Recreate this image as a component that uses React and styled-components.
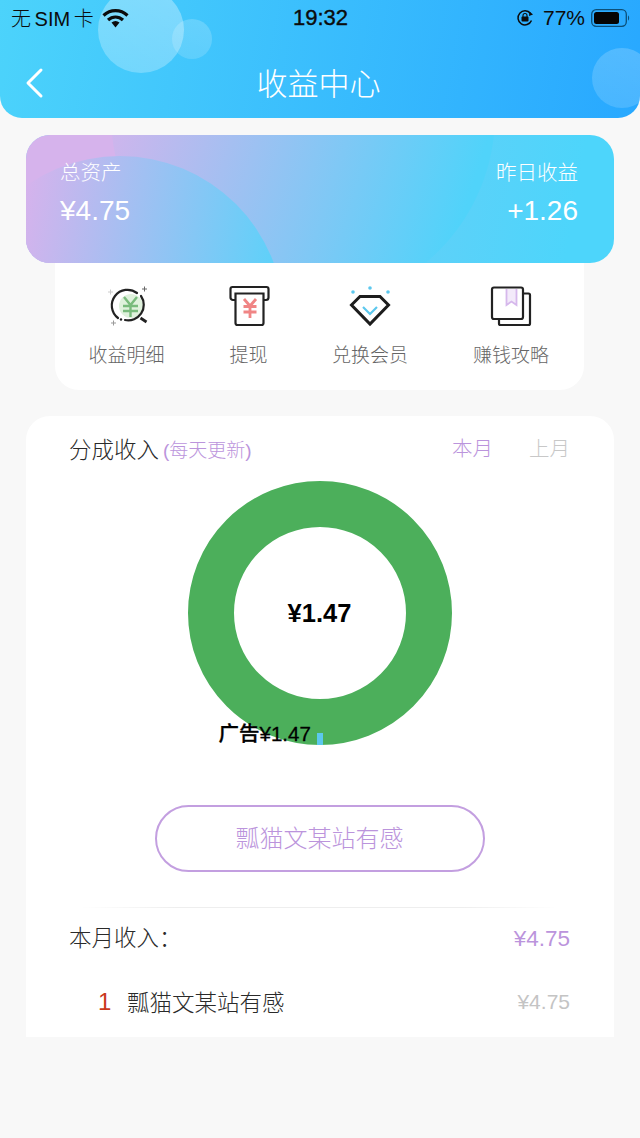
import React from 'react';
import styled, { createGlobalStyle } from 'styled-components';

const GlobalStyle = createGlobalStyle`
  html, body {
    margin: 0;
    padding: 0;
    background: #f8f8f8;
    font-family: "Liberation Sans", "Noto Sans CJK SC", sans-serif;
    font-weight: 300;
  }
  * { box-sizing: border-box; }
`;

const Page = styled.div`
  width: 640px;
  height: 1138px;
  overflow: hidden;
  background: #f8f8f8;
`;

const Header = styled.header`
  position: relative;
  height: 118px;
  overflow: hidden;
  border-radius: 0 0 22px 22px;
  background: linear-gradient(100deg, #4cd3fb 0%, #28a8ff 100%);
`;

const Bubble = styled.div`
  position: absolute;
  left: ${p => p.$x - p.$r}px;
  top: ${p => p.$y - p.$r}px;
  width: ${p => p.$r * 2}px;
  height: ${p => p.$r * 2}px;
  border-radius: 50%;
  background: linear-gradient(200deg, rgba(255, 255, 255, ${p => p.$alpha}) 0%, rgba(255, 255, 255, ${p => p.$alpha * 0.7}) 100%);
`;

const StatusBar = styled.div`
  position: relative;
  display: grid;
  grid-template-columns: 1fr auto 1fr;
  align-items: center;
  height: 35px;
  padding: 0 10px 0 11px;
  color: #0c0c0c;
  font-size: 20px;
`;

const StatusSide = styled.div`
  display: flex;
  align-items: center;
  gap: ${p => p.$gap || 8}px;
  justify-content: ${p => (p.$right ? 'flex-end' : 'flex-start')};
`;

const Carrier = styled.span`
  word-spacing: -2px;
`;

const Percent = styled.span`
  margin-left: 3px;
  font-size: 21px;
`;

const Clock = styled.div`
  font-size: 22px;
  font-weight: 400;
  -webkit-text-stroke: 0.4px #0c0c0c;
`;

const NavBar = styled.div`
  position: relative;
  display: flex;
  align-items: center;
  justify-content: center;
  height: 80px;
`;

const BackButton = styled.button`
  position: absolute;
  left: 24px;
  top: 32px;
  width: 22px;
  height: 32px;
  padding: 0;
  border: 0;
  background: none;
`;

const Title = styled.h1`
  margin: 0;
  padding: 20px 3px 0 0;
  color: #fff;
  font-size: 31px;
  font-weight: 300;
  line-height: 40px;
`;

const Content = styled.main`
  padding: 17px 26px 0;
`;

const AssetCard = styled.section`
  position: relative;
  display: flex;
  justify-content: space-between;
  height: 128px;
  padding: 24px 36px 0 34px;
  overflow: hidden;
  border-radius: 24px;
  color: #fff;
  background: linear-gradient(100deg, #8fc4f1 0%, #4dd5fb 92%);
`;

const SideFill = styled.div`
  position: absolute;
  inset: 0 auto 0 0;
  width: 130px;
  background: #d6b3ec;
`;

const BigArc = styled.div`
  position: absolute;
  left: 85px;
  top: -212px;
  width: 384px;
  height: 384px;
  border-radius: 50%;
  background: linear-gradient(108deg, #d4b4ec 10%, #50d3fa 88%);
`;

const FrontArc = styled.div`
  position: absolute;
  left: -70px;
  top: 21px;
  width: 328px;
  height: 328px;
  border-radius: 50%;
  background: linear-gradient(100deg, #d8b2ec 18%, #4dd5fb 97%);
`;

const AssetColumn = styled.div`
  position: relative;
  text-align: ${p => (p.$right ? 'right' : 'left')};
`;

const AssetLabel = styled.div`
  font-size: 20.5px;
  line-height: 28px;
`;

const AssetValue = styled.div`
  margin-top: 8px;
  font-size: 28px;
  line-height: 32px;
`;

const Menu = styled.nav`
  display: grid;
  grid-template-columns: 143px 101px 142px 140px;
  height: 127px;
  margin: 0 30px 0 29px;
  padding-top: 21px;
  border-radius: 0 0 24px 24px;
  background: #fff;
`;

const MenuItem = styled.a`
  display: flex;
  flex-direction: column;
  align-items: center;
  color: #666;
  font-size: 19px;
  line-height: 26px;
`;

const MenuIcon = styled.svg`
  width: 48px;
  height: 48px;
  margin-bottom: 11px;
`;

const ChartCard = styled.section`
  position: relative;
  height: 621px;
  margin-top: 26px;
  padding: 0 44px 0 43px;
  border-radius: 24px 24px 0 0;
  background: #fff;
`;

const ChartHeader = styled.div`
  display: flex;
  align-items: center;
  height: 65px;
`;

const ChartTitle = styled.span`
  padding-bottom: 2px;
  color: #2a2a2a;
  font-size: 22.5px;
`;

const ChartHint = styled.span`
  margin-left: 4px;
  color: #bb94dc;
  font-size: 19px;
`;

const Tabs = styled.div`
  display: flex;
  gap: 36px;
  margin-left: auto;
  padding-bottom: 3px;
`;

const Tab = styled.span`
  color: ${p => (p.$active ? '#bb94dc' : '#c8c8c8')};
  font-size: 20.5px;
`;

const Donut = styled.div`
  position: relative;
  width: 264px;
  height: 264px;
  margin: 0 auto;
`;

const DonutTotal = styled.div`
  position: absolute;
  inset: 0;
  display: flex;
  align-items: center;
  justify-content: center;
  color: #000;
  font-size: 25.5px;
  font-weight: 700;
`;

const DonutLabel = styled.div`
  position: absolute;
  left: 31px;
  top: 240px;
  color: #000;
  font-size: 20.5px;
  font-weight: 500;
  -webkit-text-stroke: 0.3px #000;
  line-height: 26px;
  white-space: nowrap;
`;

const DonutTick = styled.div`
  position: absolute;
  left: 129px;
  top: 252px;
  width: 6px;
  height: 12px;
  background: #5cc8ee;
`;

const SourceButton = styled.button`
  display: block;
  width: 330px;
  height: 67px;
  margin: 60px auto 0;
  padding: 0 0 5px;
  border: 2px solid #c39fe0;
  border-radius: 34px;
  background: #fff;
  color: #bb94dc;
  font-family: inherit;
  font-weight: 300;
  font-size: 24px;
`;

const Divider = styled.div`
  height: 1px;
  margin: 35px 12px 0;
  background: linear-gradient(90deg, #fff, #eeeeee 20%, #eeeeee 80%, #fff);
`;

const SummaryRow = styled.div`
  display: flex;
  align-items: center;
  justify-content: space-between;
  height: 60px;
`;

const SummaryLabel = styled.span`
  padding-bottom: 4px;
  color: #2a2a2a;
  font-size: 22.5px;
`;

const SummaryValue = styled.span`
  padding-top: 2px;
  color: #bb94dc;
  font-size: 22.5px;
`;

const IncomeRow = styled.div`
  display: flex;
  align-items: center;
  height: 68px;
  padding-left: 29px;
`;

const Rank = styled.span`
  width: 29px;
  color: #c9391c;
  font-size: 24px;
`;

const IncomeName = styled.span`
  padding-bottom: 2px;
  color: #2a2a2a;
  font-size: 22.5px;
`;

const IncomeValue = styled.span`
  margin-left: auto;
  color: #c4c4c4;
  font-size: 21px;
`;

const WifiIcon = () => (
  <svg width="27" height="20" viewBox="0 0 27 20">
    <path d="M1.500 7.500C8.500 1 18.500 1 25.500 7.500" fill="none" stroke="#0c0c0c" strokeWidth="3.200" />
    <path d="M6 12c4.500-4 10.500-4 15 0" fill="none" stroke="#0c0c0c" strokeWidth="3.200" />
    <path d="M9.500 14.500c2.500-2 5.500-2 8 0L13.500 19.500z" fill="#0c0c0c" />
  </svg>
);

const LockIcon = () => (
  <svg width="18" height="20" viewBox="0 0 18 20">
    <path d="M15.500 12.500A7 7 0 1 1 14.500 5.500" fill="none" stroke="#0c0c0c" strokeWidth="1.500" />
    <path d="M13.500 3.500l3.500 3-4 1.500z" fill="#0c0c0c" />
    <rect x="5.500" y="8.500" width="7" height="5" rx="1" fill="#0c0c0c" />
    <path d="M7 9V7.500a2 2 0 0 1 4 0V9" fill="none" stroke="#0c0c0c" strokeWidth="1.100" />
  </svg>
);

const BatteryIcon = () => (
  <svg width="39" height="20" viewBox="0 0 39 20">
    <rect x="0.700" y="1.700" width="34.600" height="16.600" rx="4.500" fill="none" stroke="#0c4f78" strokeWidth="1.300" />
    <rect x="3" y="4" width="25" height="12" rx="2.500" fill="#050505" />
    <path d="M37 7.500c1.500.5 1.500 4.500 0 5z" fill="#0c4f78" />
  </svg>
);

const DetailIcon = () => (
  <MenuIcon viewBox="0 0 48 48">
    <circle cx="28" cy="22" r="12" fill="#dff1dc" />
    <path d="M37.500 34l6 4" fill="none" stroke="#222" strokeWidth="2.800" />
    <path d="M15 34a15.500 15.500 0 0 1 19-25M38 12a15.500 15.500 0 0 1-16 24" fill="none" stroke="#222" strokeWidth="2.200" strokeLinecap="round" />
    <circle cx="18" cy="35.500" r="1.200" fill="#222" />
    <path d="M21 13l6.500 8 6.500-8M20 22h15M20 27h15M27.500 21v12" fill="none" stroke="#79bb7c" strokeWidth="2.400" />
    <path d="M41.500 2.500v5M39 5h5" stroke="#666" strokeWidth="1" />
    <path d="M7.500 5.500v5M5 8h5" stroke="#ccc" strokeWidth="1" />
    <path d="M10.500 36.500v5M8 39h5" stroke="#999" strokeWidth="1" />
  </MenuIcon>
);

const WithdrawIcon = () => (
  <MenuIcon viewBox="0 0 48 48">
    <path d="M10 16H8a2.500 2.500 0 0 1-2.500-2.500V5a2 2 0 0 1 2-2h34a2 2 0 0 1 2 2v8.500A2.500 2.500 0 0 1 41 16h-2" fill="none" stroke="#222" strokeWidth="2.200" />
    <path d="M10.500 9.500h28V39a2 2 0 0 1-2 2h-24a2 2 0 0 1-2-2z" fill="#fff" stroke="#222" strokeWidth="2.200" />
    <path d="M19 15l6 7 6-7M18.500 22.500h13M18.500 28h13M25 22v12" fill="none" stroke="#f08585" strokeWidth="2.800" />
  </MenuIcon>
);

const DiamondIcon = () => (
  <MenuIcon viewBox="0 0 48 48">
    <circle cx="7" cy="8" r="1.800" fill="#5cc8ee" />
    <circle cx="24" cy="4" r="1.800" fill="#5cc8ee" />
    <circle cx="42" cy="8" r="1.800" fill="#5cc8ee" />
    <path d="M14 12.500h20l8.500 8.500L24 40 5.500 21z" fill="none" stroke="#1d1d1d" strokeWidth="3" />
    <path d="M17 23l7 7 7-7" fill="none" stroke="#5cc8ee" strokeWidth="2.200" />
  </MenuIcon>
);

const GuideIcon = () => (
  <MenuIcon viewBox="0 0 48 48">
    <path d="M37 9.500h4.500a1.500 1.500 0 0 1 1.500 1.500v28.500a1.500 1.500 0 0 1-1.500 1.500H13.500a1.500 1.500 0 0 1-1.500-1.500V36" fill="none" stroke="#222" strokeWidth="2.200" />
    <rect x="5" y="3.500" width="31" height="31.500" rx="2" fill="#fff" stroke="#222" strokeWidth="2.200" />
    <path d="M19.500 5v16l5-3.500 5 3.500V5" fill="#f3eafa" stroke="#d6b8ec" strokeWidth="1.800" />
  </MenuIcon>
);

const App = () => (
  <Page>
    <GlobalStyle />
    <Header>
      <Bubble $x={141} $y={30} $r={43} $alpha={0.34} />
      <Bubble $x={192} $y={39} $r={20} $alpha={0.2} />
      <Bubble $x={622} $y={78} $r={30} $alpha={0.2} />
      <StatusBar>
        <StatusSide>
          <Carrier>无 SIM 卡</Carrier>
          <WifiIcon />
        </StatusSide>
        <Clock>19:32</Clock>
        <StatusSide $right $gap={6}>
          <LockIcon />
          <Percent>77%</Percent>
          <BatteryIcon />
        </StatusSide>
      </StatusBar>
      <NavBar>
        <BackButton aria-label="返回">
          <svg width="22" height="32" viewBox="0 0 22 32">
            <path d="M17 3L4 16l13 13" fill="none" stroke="#fff" strokeWidth="3" strokeLinecap="round" strokeLinejoin="round" />
          </svg>
        </BackButton>
        <Title>收益中心</Title>
      </NavBar>
    </Header>
    <Content>
      <AssetCard>
        <SideFill />
        <BigArc />
        <FrontArc />
        <AssetColumn>
          <AssetLabel>总资产</AssetLabel>
          <AssetValue>¥4.75</AssetValue>
        </AssetColumn>
        <AssetColumn $right>
          <AssetLabel>昨日收益</AssetLabel>
          <AssetValue>+1.26</AssetValue>
        </AssetColumn>
      </AssetCard>
      <Menu>
        <MenuItem><DetailIcon />收益明细</MenuItem>
        <MenuItem><WithdrawIcon />提现</MenuItem>
        <MenuItem><DiamondIcon />兑换会员</MenuItem>
        <MenuItem><GuideIcon />赚钱攻略</MenuItem>
      </Menu>
      <ChartCard>
        <ChartHeader>
          <ChartTitle>分成收入</ChartTitle>
          <ChartHint>(每天更新)</ChartHint>
          <Tabs>
            <Tab $active>本月</Tab>
            <Tab>上月</Tab>
          </Tabs>
        </ChartHeader>
        <Donut>
          <svg width="264" height="264" viewBox="0 0 264 264">
            <circle cx="132" cy="132" r="109" fill="none" stroke="#4caf5b" strokeWidth="46" />
          </svg>
          <DonutTotal>¥1.47</DonutTotal>
          <DonutLabel>广告¥1.47</DonutLabel>
          <DonutTick />
        </Donut>
        <SourceButton>瓢猫文某站有感</SourceButton>
        <Divider />
        <SummaryRow>
          <SummaryLabel>本月收入：</SummaryLabel>
          <SummaryValue>¥4.75</SummaryValue>
        </SummaryRow>
        <IncomeRow>
          <Rank>1</Rank>
          <IncomeName>瓢猫文某站有感</IncomeName>
          <IncomeValue>¥4.75</IncomeValue>
        </IncomeRow>
      </ChartCard>
    </Content>
  </Page>
);

export default App;
